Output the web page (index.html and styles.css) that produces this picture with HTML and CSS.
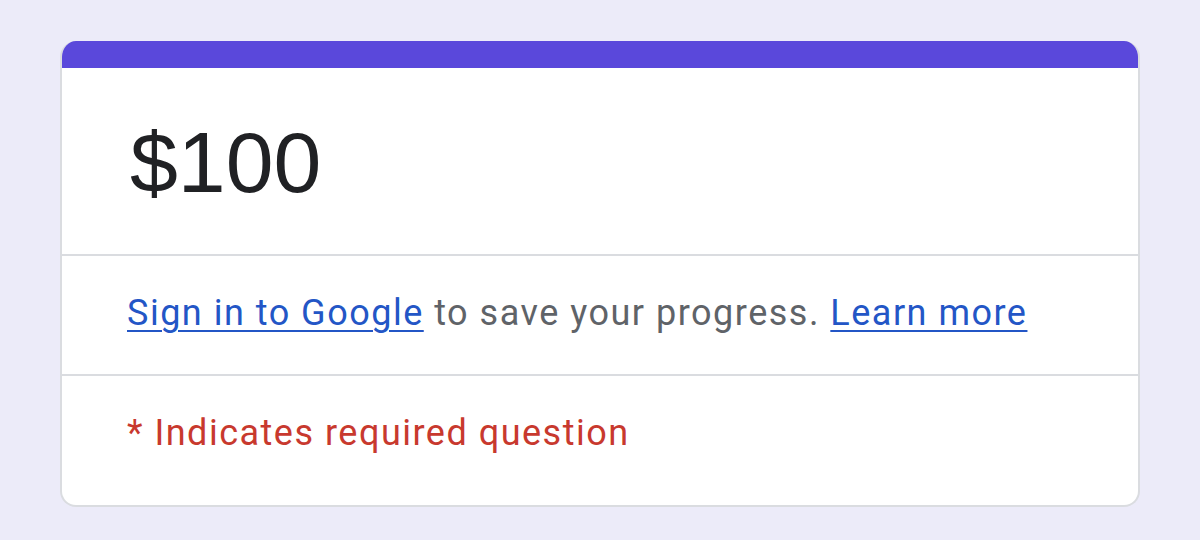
FILE: index.html
```html
<!DOCTYPE html>
<html lang="en">
<head>
<meta charset="utf-8">
<title>$100</title>
<link rel="stylesheet" href="styles.css">
</head>
<body>
<div class="card">
  <div class="card-bar"></div>
  <div class="section title-section">
    <h1 class="title">$100</h1>
  </div>
  <div class="section signin-section">
    <p class="signin"><a href="#" class="link">Sign in to Google</a> to save your progress. <a href="#" class="link">Learn more</a></p>
  </div>
  <div class="section required-section">
    <p class="required">* Indicates required question</p>
  </div>
</div>
</body>
</html>
```

FILE: styles.css
```css
html, body {
  margin: 0;
  padding: 0;
}
body {
  background: #ecebf9;
  padding: 41px 60px 0 60px;
  font-family: Roboto, "Liberation Sans", Arial, sans-serif;
}
.card {
  background: #ffffff;
  border: 2px solid #dadce0;
  border-top: none;
  border-radius: 16px;
  overflow: hidden;
  height: 466px;
  box-sizing: border-box;
  display: flex;
  flex-direction: column;
}
.card-bar {
  height: 27px;
  background: #5a48db;
  margin: 0 -2px;
}
.section {
  padding-left: 65px;
  padding-right: 40px;
}
.title-section {
  padding-top: 51px;
  padding-bottom: 49px;
  border-bottom: 2px solid #dadce0;
}
.title {
  margin: 0 0 0 3px;
  font-family: "Liberation Sans", Arial, sans-serif;
  font-weight: 400;
  font-size: 86px;
  line-height: 86px;
  color: #202124;
}
.signin-section {
  padding-top: 33px;
  padding-bottom: 37px;
  border-bottom: 2px solid #dadce0;
}
.signin {
  margin: 0;
  font-size: 36px;
  line-height: 48px;
  letter-spacing: 1.5px;
  color: #5f6368;
}
.link {
  color: #2356c6;
  text-decoration: underline;
  text-underline-offset: 5px;
  text-decoration-thickness: 2px;
}
.required-section {
  padding-top: 33px;
}
.required {
  margin: 0;
  font-size: 36px;
  line-height: 48px;
  letter-spacing: 1.5px;
  color: #c8392e;
}
```
